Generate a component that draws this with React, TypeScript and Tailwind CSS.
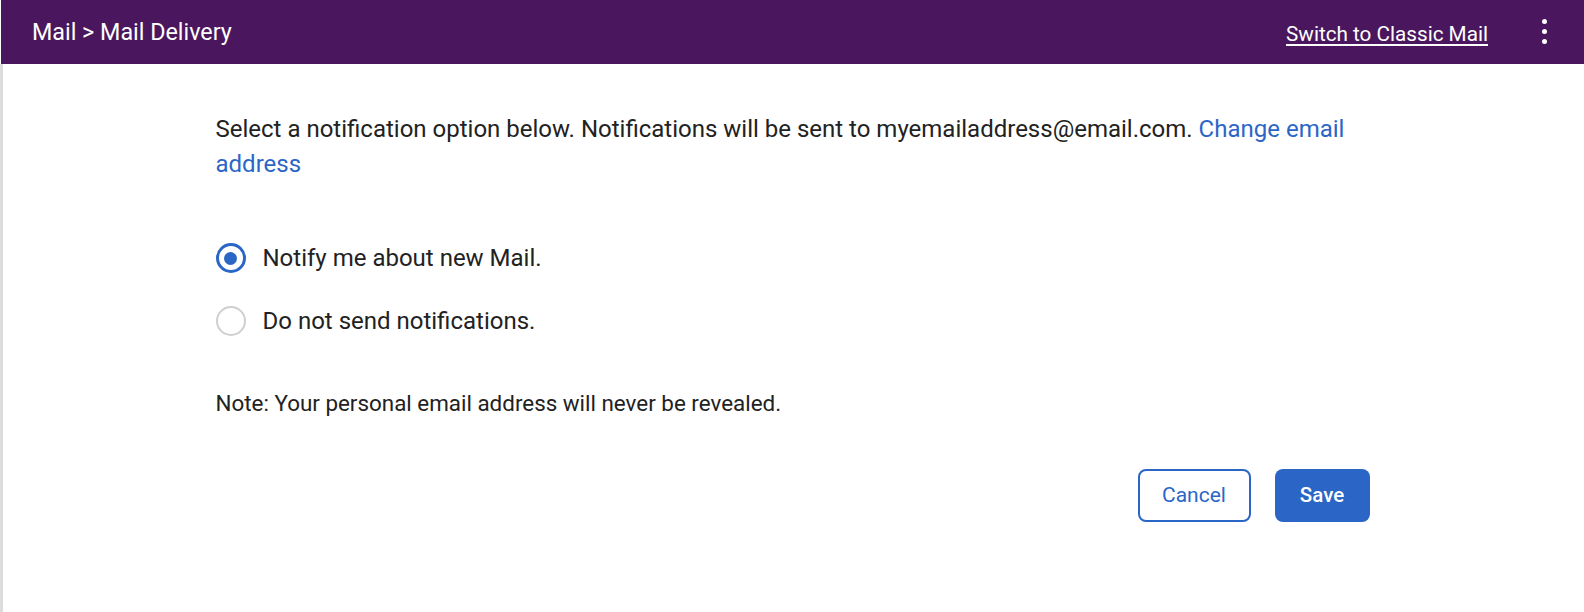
import { useState } from "react";

type Option = { id: string; label: string };

const options: Option[] = [
  { id: "notify", label: "Notify me about new Mail." },
  { id: "none", label: "Do not send notifications." },
];

function Radio({ checked }: { checked: boolean }) {
  return checked ? (
    <span className="flex h-[30px] w-[30px] shrink-0 items-center justify-center rounded-full border-[3px] border-[#2b66c7]">
      <span className="h-[13px] w-[13px] rounded-full bg-[#2b66c7]" />
    </span>
  ) : (
    <span className="h-[30px] w-[30px] shrink-0 rounded-full border-[2.5px] border-[#cfcfcf]" />
  );
}

export default function App() {
  const [selected, setSelected] = useState("notify");

  return (
    <div className="min-h-[612px] bg-white font-['Roboto',_'Liberation_Sans',_sans-serif] text-[#222]">
      {/* Top bar */}
      <header className="ml-px flex h-[64px] items-center justify-between bg-[#4a175e] pl-[31px] pr-[37px] text-white">
        <h1 className="text-[23.3px] font-normal">Mail &gt; Mail Delivery</h1>
        <div className="flex items-center gap-[54px] pt-[6px]">
          <a href="#" className="text-[20.7px] underline underline-offset-[3px]">
            Switch to Classic Mail
          </a>
          <button className="flex flex-col items-center gap-[5px] pb-[6px]">
            <span className="h-[5px] w-[5px] rounded-full bg-white" />
            <span className="h-[5px] w-[5px] rounded-full bg-white" />
            <span className="h-[5px] w-[5px] rounded-full bg-white" />
          </button>
        </div>
      </header>

      <div className="flex min-h-[548px] border-l-[3px] border-[#dcdcdc]">
        <main className="mx-auto w-[1156px] pt-[48px]">
          <p className="text-[24px] leading-[35px]">
            Select a notification option below. Notifications will be sent to myemailaddress@email.com.{" "}
            <a href="#" className="text-[#2b66c7]">
              Change email address
            </a>
          </p>

          <div className="mt-[52px] flex flex-col gap-[15px]">
            {options.map((o) => (
              <label
                key={o.id}
                onClick={() => setSelected(o.id)}
                className="flex h-[48px] cursor-pointer items-center gap-[17px] text-[24px]"
              >
                <Radio checked={selected === o.id} />
                {o.label}
              </label>
            ))}
          </div>

          <p className="mt-[46px] text-[22.4px] leading-[24px]">
            Note: Your personal email address will never be revealed.
          </p>

          <div className="mt-[54px] flex justify-end gap-[24px] pr-[2px]">
            <button className="h-[53px] w-[113px] rounded-[8px] border-2 border-[#2b66c7] text-[21px] text-[#2b66c7]">
              Cancel
            </button>
            <button className="h-[53px] w-[95px] rounded-[8px] bg-[#2b66c7] text-[20.5px] font-medium text-white">
              Save
            </button>
          </div>
        </main>
      </div>
    </div>
  );
}
